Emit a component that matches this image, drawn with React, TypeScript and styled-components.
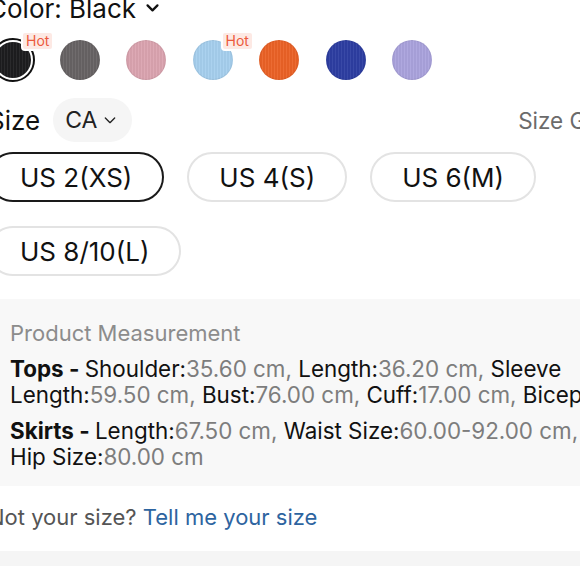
import React from 'react';
import styled, {createGlobalStyle} from 'styled-components';

const GlobalStyle = createGlobalStyle`
  html, body {
    margin: 0;
    padding: 0;
    background: #fff;
    overflow: hidden;
  }
  body {
    font-family: Inter, "Liberation Sans", sans-serif;
    color: #111;
  }
`;

type Swatch = {name: string; color: string; hot?: boolean};

const SWATCHES: Swatch[] = [
  {name: 'Black', color: '#1d1d1f', hot: true},
  {name: 'Grey', color: '#676364'},
  {name: 'Pink', color: '#dba4b0'},
  {name: 'Sky Blue', color: '#a6cfee', hot: true},
  {name: 'Orange', color: '#eb6226'},
  {name: 'Royal Blue', color: '#2d3ea2'},
  {name: 'Lavender', color: '#aaa3dd'},
];

const SIZES = ['US 2(XS)', 'US 4(S)', 'US 6(M)', 'US 8/10(L)'];

type Measure = {label: string; value: string};

const TOPS: Measure[] = [
  {label: 'Shoulder', value: '35.60 cm'},
  {label: 'Length', value: '36.20 cm'},
  {label: 'Sleeve Length', value: '59.50 cm'},
  {label: 'Bust', value: '76.00 cm'},
  {label: 'Cuff', value: '17.00 cm'},
  {label: 'Bicep Length', value: '29.00 cm'},
];

const SKIRTS: Measure[] = [
  {label: 'Length', value: '67.50 cm'},
  {label: 'Waist Size', value: '60.00-92.00 cm'},
  {label: 'Hip Size', value: '80.00 cm'},
];

const Chevron: React.FC<{size: number; weight: number}> = ({size, weight}) => (
  <svg width={size} height={size} viewBox="0 0 24 24" fill="none">
    <path
      d="M5 9l7 7 7-7"
      stroke="currentColor"
      strokeWidth={weight}
      strokeLinecap="round"
      strokeLinejoin="round"
    />
  </svg>
);

const MeasureLine: React.FC<{title: string; items: Measure[]}> = ({title, items}) => (
  <MeasureText>
    <b>{title} - </b>
    {items.map((m, i) => (
      <React.Fragment key={m.label}>
        {m.label}:<Value>{m.value}</Value>
        {i < items.length - 1 ? <Value>, </Value> : null}
      </React.Fragment>
    ))}
  </MeasureText>
);

export default function App() {
  return (
    <Page>
      <GlobalStyle />
      <ColorHeader>
        <span>Color: Black</span>
        <Chevron size={17} weight={3.2} />
      </ColorHeader>

      <SwatchRow>
        {SWATCHES.map((s, i) => (
          <SwatchItem key={s.name} $selected={i === 0}>
            <SwatchDot $color={s.color} />
            {s.hot && <HotBadge>Hot</HotBadge>}
          </SwatchItem>
        ))}
      </SwatchRow>

      <SizeHeader>
        <SizeLeft>
          <SizeLabel>Size</SizeLabel>
          <RegionPill>
            CA
            <Chevron size={16} weight={2} />
          </RegionPill>
        </SizeLeft>
        <SizeGuide>Size Guide</SizeGuide>
      </SizeHeader>

      <SizeGrid>
        {SIZES.map((s, i) => (
          <SizeButton key={s} type="button" $active={i === 0}>
            {s}
          </SizeButton>
        ))}
      </SizeGrid>

      <MeasureBox>
        <MeasureTitle>Product Measurement</MeasureTitle>
        <MeasureLine title="Tops" items={TOPS} />
        <MeasureLine title="Skirts" items={SKIRTS} />
      </MeasureBox>

      <NotYourSize>
        Not your size? <TellLink href="#">Tell me your size</TellLink>
      </NotYourSize>

      <Divider />
    </Page>
  );
}

const Page = styled.div`
  width: 636px;
  margin: -5px 0 0 -12px;
`;

const ColorHeader = styled.div`
  display: flex;
  align-items: center;
  gap: 8px;
  height: 28px;
  font-size: 26px;
  line-height: 28px;
  color: #111;

  svg {
    margin-top: -3px;
  }
`;

const SwatchRow = styled.div`
  display: flex;
  gap: 22.5px;
  margin-top: 15px;
  padding-left: 3px;
`;

const SwatchItem = styled.div<{$selected: boolean}>`
  position: relative;
  width: 44px;
  height: 44px;
  box-sizing: border-box;
  border-radius: 50%;
  border: 2px solid ${p => (p.$selected ? '#111' : 'transparent')};
  padding: ${p => (p.$selected ? '2px' : '0')};
`;

const SwatchDot = styled.div<{$color: string}>`
  width: 100%;
  height: 100%;
  border-radius: 50%;
  background-color: ${p => p.$color};
  background-image: repeating-linear-gradient(
    90deg,
    rgba(255, 255, 255, 0.06) 0 1px,
    rgba(0, 0, 0, 0.03) 1px 3px
  );
  box-shadow: inset 0 0 0 1px rgba(0, 0, 0, 0.05);
`;

const HotBadge = styled.span`
  position: absolute;
  left: 30px;
  top: -7px;
  padding: 0 3px;
  border-radius: 2px;
  background: #fde9e4;
  box-shadow: 0 0 0 2px #fff;
  color: #ec5a3c;
  font-size: 14px;
  line-height: 16px;
`;

const SizeHeader = styled.div`
  display: flex;
  align-items: center;
  justify-content: space-between;
  margin: 16px -8px 0 0;
  height: 44px;
`;

const SizeLeft = styled.div`
  display: flex;
  align-items: center;
  gap: 13px;
`;

const SizeLabel = styled.span`
  font-size: 26px;
`;

const RegionPill = styled.div`
  display: flex;
  align-items: center;
  gap: 5px;
  height: 44px;
  padding: 0 14px 0 12px;
  border-radius: 22px;
  background: #f5f5f5;
  font-size: 23px;
  color: #222;
`;

const SizeGuide = styled.span`
  font-size: 22.5px;
  color: #6b6b6b;
`;

const SizeGrid = styled.div`
  display: flex;
  flex-wrap: wrap;
  gap: 24px 23px;
  margin-top: 10px;
`;

const SizeButton = styled.button<{$active: boolean}>`
  height: 50px;
  padding: 0 30px;
  border-radius: 25px;
  border: 2px solid ${p => (p.$active ? '#1a1a1a' : '#e3e3e3')};
  background: #fff;
  font-family: inherit;
  font-size: 26px;
  color: #111;
`;

const MeasureBox = styled.div`
  margin-top: 23px;
  height: 187px;
  box-sizing: border-box;
  padding: 21px 22px 0;
  background: #f8f8f8;
`;

const MeasureTitle = styled.div`
  font-size: 22px;
  line-height: 26px;
  color: #8c8c8c;
`;

const MeasureText = styled.p`
  display: -webkit-box;
  -webkit-box-orient: vertical;
  -webkit-line-clamp: 2;
  overflow: hidden;
  margin: 10px 0 0;
  font-size: 22.4px;
  line-height: 26px;
  color: #111;

  & + & {
    margin-top: 10px;
  }

  b {
    font-weight: 700;
  }
`;

const Value = styled.span`
  color: #7d7d7d;
`;

const NotYourSize = styled.div`
  margin-top: 18px;
  font-size: 22px;
  line-height: 26px;
  color: #555;
`;

const TellLink = styled.a`
  color: #2d64a0;
  text-decoration: none;
`;

const Divider = styled.div`
  margin-top: 21px;
  height: 15px;
  background: #f5f5f5;
`;
